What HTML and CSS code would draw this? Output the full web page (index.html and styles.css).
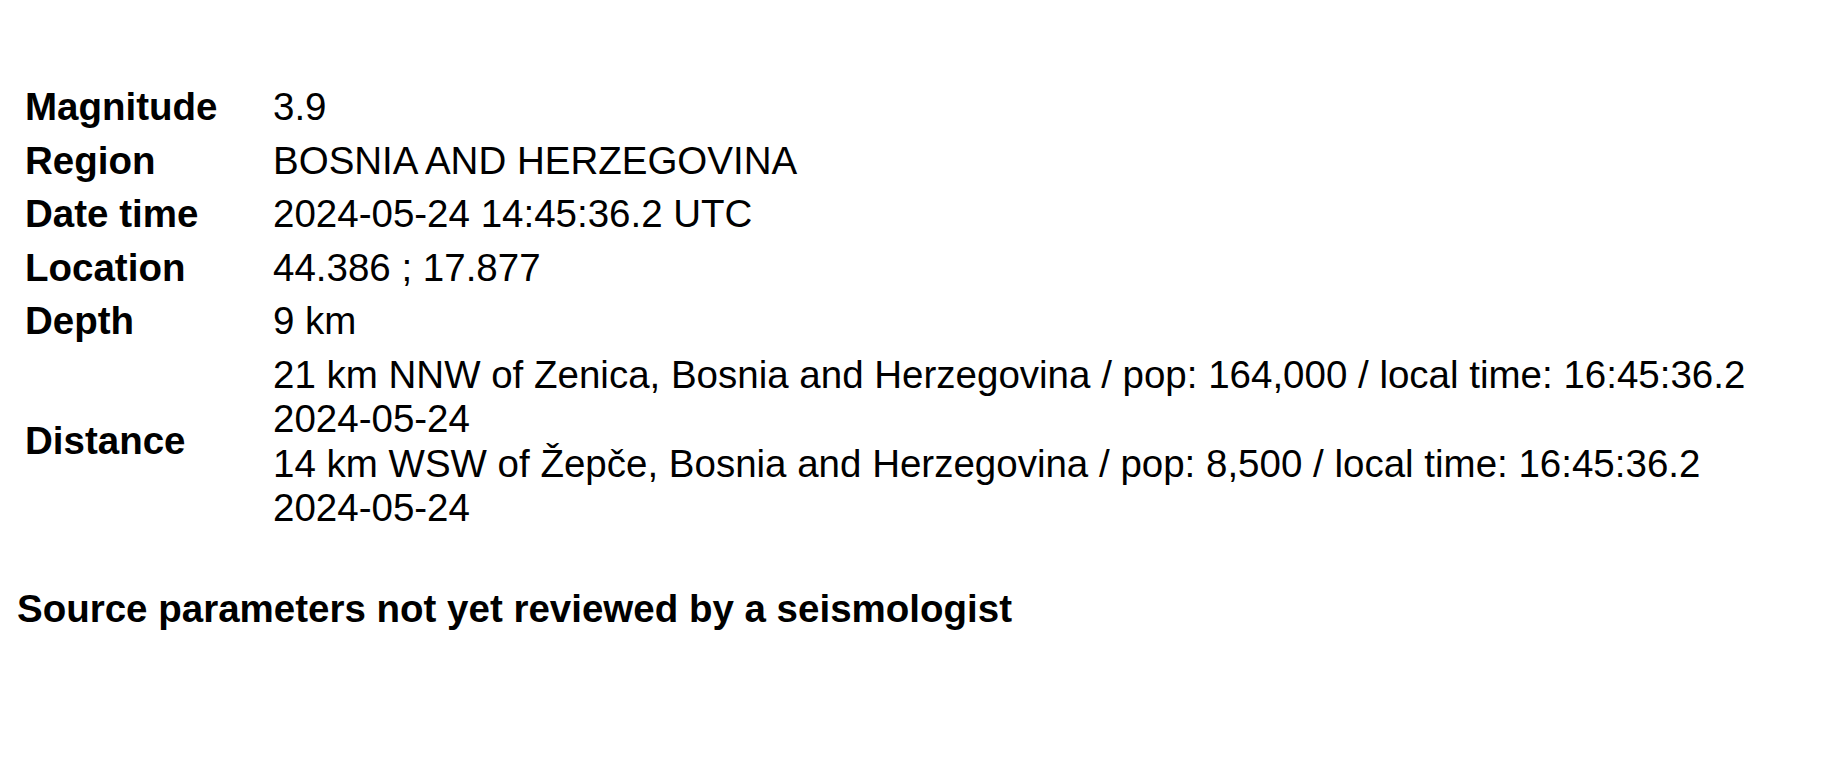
FILE: index.html
```html
<!DOCTYPE html>
<html lang="en">
<head>
<meta charset="utf-8">
<title>Earthquake details</title>
<link rel="stylesheet" href="styles.css">
</head>
<body>
<div class="page">
  <div class="info">
    <div class="label">Magnitude</div>
    <div class="value">3.9</div>
    <div class="label">Region</div>
    <div class="value">BOSNIA AND HERZEGOVINA</div>
    <div class="label">Date time</div>
    <div class="value">2024-05-24 14:45:36.2 UTC</div>
    <div class="label">Location</div>
    <div class="value">44.386 ; 17.877</div>
    <div class="label">Depth</div>
    <div class="value">9 km</div>
    <div class="label label-middle">Distance</div>
    <div class="value">
      <div>21 km NNW of Zenica, Bosnia and Herzegovina / pop: 164,000 / local time: 16:45:36.2 <span class="date">2024-05-24</span></div>
      <div>14 km WSW of Žepče, Bosnia and Herzegovina / pop: 8,500 / local time: 16:45:36.2 <span class="date">2024-05-24</span></div>
    </div>
  </div>
  <p class="note">Source parameters not yet reviewed by a seismologist</p>
</div>
</body>
</html>
```
FILE: styles.css
```css
html, body {
  margin: 0;
  padding: 0;
  background: #ffffff;
}

body {
  font-family: "Liberation Sans", Arial, sans-serif;
  color: #000000;
  font-size: 38.5px;
  line-height: 44.3px;
}

.page {
  padding: 80.5px 0 0 17px;
}

.info {
  display: grid;
  grid-template-columns: 256px 1fr;
}

.label {
  font-weight: bold;
  padding: 4.65px 0 4.65px 8px;
}

.label-middle {
  align-self: center;
}

.value {
  padding: 4.65px 0;
}

.date {
  white-space: nowrap;
}

.note {
  margin: 52.4px 0 0 0;
  font-weight: bold;
}
```
